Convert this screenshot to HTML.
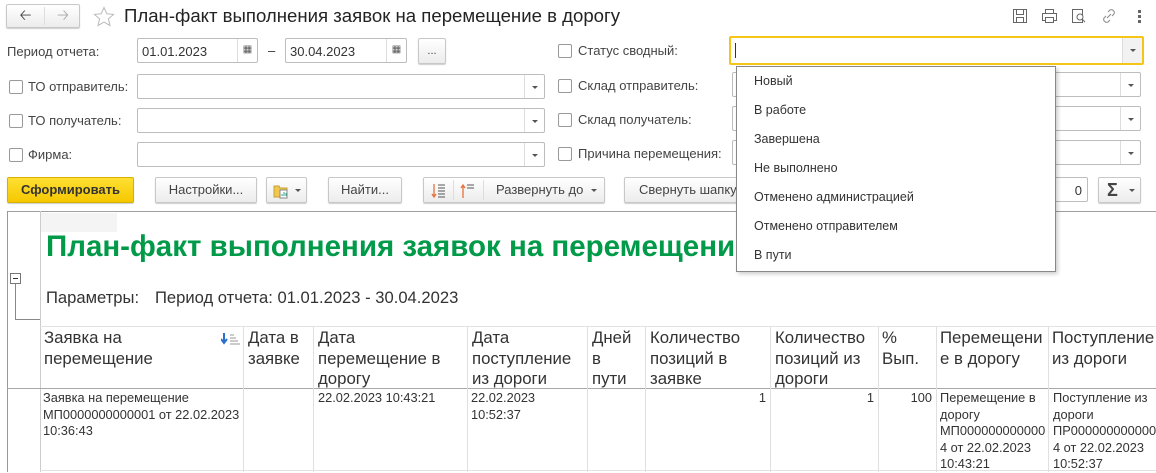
<!DOCTYPE html>
<html><head><meta charset="utf-8"><style>
*{box-sizing:border-box;margin:0;padding:0}
body{width:1156px;height:472px;background:#fff;font-family:"Liberation Sans",Arial,sans-serif;font-size:13px;color:#333;position:relative;overflow:hidden}
.a{position:absolute}
.fld{position:absolute;border:1px solid #bdbdbd;border-radius:2px;background:#fff;height:25px}
.dd{position:absolute;right:0;top:0;bottom:0;width:20px;border-left:1px solid #ddd}
.dd:after{content:"";position:absolute;left:7px;top:11px;border-left:3px solid transparent;border-right:3px solid transparent;border-top:3px solid #555}
.cb{position:absolute;width:14px;height:14px;border:1px solid #999;border-radius:2px;background:#fff}
.btn{position:absolute;height:26px;border:1px solid #c8c8c8;border-radius:2px;background:linear-gradient(#fff,#ececec);box-shadow:0 1px 1px rgba(0,0,0,.2);text-align:center;line-height:24px;color:#444}
.lbl{position:absolute;color:#444}
.hl{position:absolute;height:1px}
.vl{position:absolute;width:1px;background:#e0e0e0}
.th{position:absolute;font-size:16.8px;line-height:20.5px;color:#333;top:328px;white-space:nowrap}
.td{position:absolute;font-size:12.8px;line-height:16.5px;color:#333;top:390px;white-space:nowrap}
.mi{position:absolute;left:17px;font-size:12.5px;color:#333}
</style></head><body>
<div class="btn" style="left:6px;top:4px;width:74px;height:24px;line-height:22px">
<span class="a" style="left:0;width:37px;top:0;color:#444;font-size:15px">&#129120;</span>
<span class="a" style="left:37px;top:2px;bottom:2px;width:1px;background:#ddd"></span>
<span class="a" style="left:38px;width:36px;top:0;color:#aaa;font-size:15px">&#129122;</span>
</div>
<svg class="a" style="left:93px;top:6px" width="22" height="22" viewBox="0 0 22 22"><path d="M11 1.5l2.8 6.3 6.8.6-5.2 4.5 1.6 6.7L11 16.1l-6 3.5 1.6-6.7L1.4 8.4l6.8-.6z" fill="none" stroke="#bbb" stroke-width="1"/></svg>
<div class="a" style="left:124px;top:5px;font-size:18.6px;color:#222;white-space:nowrap">План-факт выполнения заявок на перемещение в дорогу</div>
<svg class="a" style="left:1012px;top:8px" width="16" height="16"><rect x="1.5" y="1.5" width="13" height="13" fill="none" stroke="#666"/><rect x="4.5" y="1.5" width="7" height="5" fill="none" stroke="#666"/><rect x="4.5" y="9.5" width="7" height="5" fill="none" stroke="#666"/></svg>
<svg class="a" style="left:1041px;top:8px" width="17" height="16"><rect x="4.5" y="1.5" width="8" height="4" fill="none" stroke="#666"/><rect x="1.5" y="5.5" width="14" height="7" fill="none" stroke="#666"/><rect x="4.5" y="9.5" width="8" height="5" fill="#fff" stroke="#666"/></svg>
<svg class="a" style="left:1071px;top:8px" width="16" height="16"><path d="M1.5 1.5h10v13h-10z" fill="none" stroke="#666"/><circle cx="9" cy="9" r="3" fill="#fff" stroke="#666"/><path d="M11 11l3 3" stroke="#666"/></svg>
<svg class="a" style="left:1101px;top:8px" width="16" height="16"><path d="M6 10l4-4M7 4l2-2a3 3 0 014 4l-2 2M9 12l-2 2a3 3 0 01-4-4l2-2" fill="none" stroke="#888"/></svg>
<div class="a" style="left:1138px;top:10px;width:3px"><div style="width:3px;height:3px;background:#666;margin-bottom:2px"></div><div style="width:3px;height:3px;background:#666;margin-bottom:2px"></div><div style="width:3px;height:3px;background:#666"></div></div>

<div class="lbl" style="left:7px;top:44px">Период отчета:</div>
<div class="fld" style="left:137px;top:38px;width:121px"><span class="a" style="left:4px;top:5px;color:#333">01.01.2023</span><div class="a" style="left:99px;top:0;bottom:0;border-left:1px solid #ddd;width:20px;font-size:10px;text-align:center;line-height:22px;color:#555">&#9638;</div></div>
<div class="a" style="left:268px;top:43px">–</div>
<div class="fld" style="left:285px;top:38px;width:122px"><span class="a" style="left:4px;top:5px;color:#333">30.04.2023</span><div class="a" style="left:100px;top:0;bottom:0;border-left:1px solid #ddd;width:20px;font-size:10px;text-align:center;line-height:22px;color:#555">&#9638;</div></div>
<div class="btn" style="left:418px;top:38px;width:28px;font-size:11px">...</div>

<div class="cb" style="left:9px;top:80px"></div><div class="lbl" style="left:28px;top:79px">ТО отправитель:</div>
<div class="fld" style="left:137px;top:74px;width:408px"><div class="dd"></div></div>
<div class="cb" style="left:9px;top:114px"></div><div class="lbl" style="left:28px;top:113px">ТО получатель:</div>
<div class="fld" style="left:137px;top:108px;width:408px"><div class="dd"></div></div>
<div class="cb" style="left:9px;top:148px"></div><div class="lbl" style="left:28px;top:147px">Фирма:</div>
<div class="fld" style="left:137px;top:142px;width:408px"><div class="dd"></div></div>

<div class="cb" style="left:558px;top:44px"></div><div class="lbl" style="left:578px;top:43px">Статус сводный:</div>
<div class="fld" style="left:729px;top:36px;width:415px;height:29px;border:2px solid #f5c518"><div class="a" style="left:4px;top:5px;width:1px;height:15px;background:#333"></div><div class="dd" style="background:#f2f2f2"></div></div>
<div class="cb" style="left:558px;top:79px"></div><div class="lbl" style="left:578px;top:78px">Склад отправитель:</div>
<div class="fld" style="left:732px;top:72px;width:409px"><div class="dd"></div></div>
<div class="cb" style="left:558px;top:113px"></div><div class="lbl" style="left:578px;top:112px">Склад получатель:</div>
<div class="fld" style="left:732px;top:106px;width:409px"><div class="dd"></div></div>
<div class="cb" style="left:558px;top:147px"></div><div class="lbl" style="left:578px;top:146px">Причина перемещения:</div>
<div class="fld" style="left:732px;top:140px;width:409px"><div class="dd"></div></div>

<div class="btn" style="left:7px;top:177px;width:127px;background:linear-gradient(#ffe033,#f5c800);border-color:#d8b000;font-weight:bold;color:#333">Сформировать</div>
<div class="btn" style="left:155px;top:177px;width:102px">Настройки...</div>
<div class="btn" style="left:266px;top:177px;width:41px"><svg class="a" style="left:6px;top:5px" width="16" height="16"><path d="M1 3h5l1 2h7v9H1z" fill="#f0c850" stroke="#c9a030"/><rect x="7" y="7" width="7" height="8" fill="#fff" stroke="#888"/><path d="M9 13v-2M11 13v-4M13 13v-3" stroke="#2a8"/></svg><span class="a" style="left:28px;top:11px;border-left:3px solid transparent;border-right:3px solid transparent;border-top:3px solid #555"></span></div>
<div class="btn" style="left:328px;top:177px;width:74px">Найти...</div>
<div class="btn" style="left:423px;top:177px;width:182px">
<svg class="a" style="left:7px;top:5px" width="16" height="16"><path d="M3 1v13M1 11l2 3 2-3" fill="none" stroke="#e8703a" stroke-width="1.3"/><path d="M7 2h7M7 5h7M7 8h7M7 11h7M7 14h7" stroke="#555"/></svg>
<span class="a" style="left:29px;top:2px;bottom:2px;width:1px;background:#ddd"></span>
<svg class="a" style="left:36px;top:5px" width="16" height="16"><path d="M3 15V2M1 5l2-3 2 3" fill="none" stroke="#e8703a" stroke-width="1.3"/><path d="M7 2h7M7 5h7" stroke="#555"/></svg>
<span class="a" style="left:59px;top:2px;bottom:2px;width:1px;background:#ddd"></span>
<span class="a" style="left:72px;top:0">Развернуть до</span><span class="a" style="left:167px;top:11px;border-left:3px solid transparent;border-right:3px solid transparent;border-top:3px solid #555"></span></div>
<div class="btn" style="left:624px;top:177px;width:130px;text-align:left;padding-left:14px">Свернуть шапку</div>
<div class="fld" style="left:1040px;top:177px;width:48px"><span class="a" style="right:5px;top:5px">0</span></div>
<div class="btn" style="left:1098px;top:177px;width:43px"><span class="a" style="left:8px;top:0;font-size:18px;font-weight:bold;color:#444">Σ</span><span class="a" style="left:30px;top:11px;border-left:3px solid transparent;border-right:3px solid transparent;border-top:3px solid #555"></span></div>

<div class="hl" style="left:7px;top:211px;width:1149px;background:#a0a0a0"></div>
<div class="vl" style="left:7px;top:211px;height:261px;background:#999"></div>
<div class="vl" style="left:40px;top:211px;height:261px;background:#ccc"></div>
<div class="a" style="left:41px;top:213px;width:76px;height:19px;background:#f4f4f4"></div>
<div class="a" style="left:46px;top:230px;font-size:29.5px;font-weight:bold;color:#009a49;white-space:nowrap">План-факт выполнения заявок на перемещении</div>
<div class="a" style="left:10px;top:273px;width:11px;height:11px;border:1px solid #777;background:#fff"><div class="a" style="left:2px;top:4px;width:5px;height:1px;background:#333"></div></div>
<div class="a" style="left:15px;top:284px;width:1px;height:36px;background:#888"></div>
<div class="a" style="left:15px;top:319px;width:25px;height:1px;background:#888"></div>
<div class="a" style="left:46px;top:288px;font-size:16.6px;color:#333">Параметры:</div>
<div class="a" style="left:155px;top:288px;font-size:16.6px;color:#333">Период отчета: 01.01.2023 - 30.04.2023</div>

<div class="hl" style="left:40px;top:326px;width:1116px;background:#e2e2e2"></div>
<div class="hl" style="left:7px;top:388px;width:1149px;background:#a8a8a8"></div>
<div class="hl" style="left:40px;top:470px;width:1116px;background:#e2e2e2"></div>
<div class="vl" style="left:243px;top:326px;height:146px"></div>
<div class="vl" style="left:313px;top:326px;height:146px"></div>
<div class="vl" style="left:467px;top:326px;height:146px"></div>
<div class="vl" style="left:587px;top:326px;height:146px"></div>
<div class="vl" style="left:645px;top:326px;height:146px"></div>
<div class="vl" style="left:770px;top:326px;height:146px"></div>
<div class="vl" style="left:878px;top:326px;height:146px"></div>
<div class="vl" style="left:936px;top:326px;height:146px"></div>
<div class="vl" style="left:1048px;top:326px;height:146px"></div>

<div class="th" style="left:44px">Заявка на<br>перемещение</div>
<svg class="a" style="left:221px;top:333px" width="20" height="12"><path d="M3 0v9M0 6l3 4 3-4" fill="none" stroke="#2a6fc9" stroke-width="2"/><path d="M9 2h4M9 5h6M9 8h8M9 11h10" stroke="#999"/></svg>
<div class="th" style="left:248px">Дата в<br>заявке</div>
<div class="th" style="left:318px">Дата<br>перемещение в<br>дорогу</div>
<div class="th" style="left:472px">Дата<br>поступление<br>из дороги</div>
<div class="th" style="left:592px">Дней<br>в<br>пути</div>
<div class="th" style="left:650px">Количество<br>позиций в<br>заявке</div>
<div class="th" style="left:775px">Количество<br>позиций из<br>дороги</div>
<div class="th" style="left:882px">%<br>Вып.</div>
<div class="th" style="left:940px">Перемещени<br>е в дорогу</div>
<div class="th" style="left:1052px">Поступление<br>из дороги</div>

<div class="td" style="left:43px">Заявка на перемещение<br>МП0000000000001 от 22.02.2023<br>10:36:43</div>
<div class="td" style="left:318px">22.02.2023 10:43:21</div>
<div class="td" style="left:471px">22.02.2023<br>10:52:37</div>
<div class="td" style="left:650px;width:116px;text-align:right">1</div>
<div class="td" style="left:775px;width:99px;text-align:right">1</div>
<div class="td" style="left:882px;width:50px;text-align:right">100</div>
<div class="td" style="left:940px">Перемещение в<br>дорогу<br>МП000000000000<br>4 от 22.02.2023<br>10:43:21</div>
<div class="td" style="left:1053px">Поступление из<br>дороги<br>ПР000000000000<br>4 от 22.02.2023<br>10:52:37</div>

<div class="a" style="left:736px;top:66px;width:320px;height:206px;background:#fff;border:1px solid #888;box-shadow:2px 2px 4px rgba(0,0,0,.2)">
<div class="mi" style="top:7px">Новый</div>
<div class="mi" style="top:36px">В работе</div>
<div class="mi" style="top:65px">Завершена</div>
<div class="mi" style="top:94px">Не выполнено</div>
<div class="mi" style="top:123px">Отменено администрацией</div>
<div class="mi" style="top:152px">Отменено отправителем</div>
<div class="mi" style="top:181px">В пути</div>
</div>
</body></html>
